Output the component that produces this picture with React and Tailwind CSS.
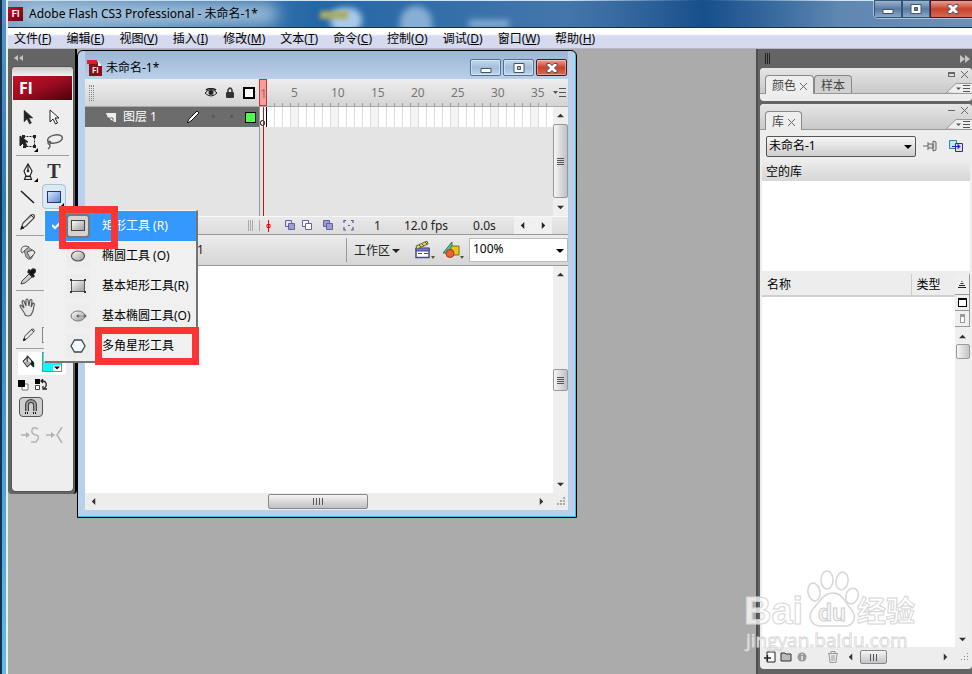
import React from 'react';

const MENUS = [
  ['文件', 'F'], ['编辑', 'E'], ['视图', 'V'], ['插入', 'I'], ['修改', 'M'], ['文本', 'T'],
  ['命令', 'C'], ['控制', 'O'], ['调试', 'D'], ['窗口', 'W'], ['帮助', 'H'],
];

const FRAMES = Array.from({ length: 37 }, (_, i) => i + 1);

// Small triangle used by scroll bars and drop-downs
function Arrow({ dir = 'down', className = 'w-[7px] h-[7px]' }) {
  const paths = {
    up: 'M0 6 4 2l4 4z',
    down: 'M0 2h8L4 6z',
    left: 'M6 0v8L2 4z',
    right: 'M2 0v8l4-4z',
  };
  return (
    <svg viewBox="0 0 8 8" className={className} fill="currentColor" aria-hidden="true">
      <path d={paths[dir]} />
    </svg>
  );
}

function Icon({ children, className = 'w-5 h-5' }) {
  return (
    <svg viewBox="0 0 20 20" className={className} fill="none" stroke="#222" strokeWidth="1" aria-hidden="true">
      {children}
    </svg>
  );
}

const Corner = () => <path d="M20 16v4h-4z" fill="#000" stroke="none" />;

const toolIcons = {
  select: <path d="M6 3v12l3-3 2.500 5 2-1-2.500-5h4z" fill="#222" stroke="#444" strokeWidth=".5" />,
  subselect: <path d="M6 3v12l3-3 2.500 5 2-1-2.500-5h4z" fill="#fff" />,
  transform: (
    <>
      <rect x="5.500" y="4.500" width="11" height="10" strokeDasharray="2 1" />
      <path d="M2 4v10l3-3 2 4 2-1-2-4h3z" fill="#222" />
      <path d="M4 3h3v3H4zM15 3h3v3h-3zM15 13h3v3h-3zM5 14h3v2H5z" fill="#222" stroke="none" />
      <Corner />
    </>
  ),
  lasso: (
    <>
      <ellipse cx="11" cy="7" rx="7.500" ry="4" transform="rotate(-12 11 7)" strokeWidth="1.400" stroke="#555" />
      <path d="M5 9c-2 1-1 4 1 3s0-3-1-3M5 12c2 2 1 3-1 5" strokeWidth="1.200" stroke="#555" />
    </>
  ),
  pen: (
    <>
      <path d="M10 2 6 9l2 5h4l2-5z" fill="#fff" strokeWidth="1.200" />
      <path d="M10 2v7M7.500 14.500h5l1 3h-7z" fill="#ddd" strokeWidth="1.200" />
      <circle cx="10" cy="9" r="1" fill="#222" />
      <Corner />
    </>
  ),
  line: <path d="M3 4l13 12" strokeWidth="1.600" />,
  pencil: (
    <>
      <path d="M3 17l2-6L13 3q2-1 3 0t0 3L8 14z" fill="#eee" stroke="#444" strokeWidth="1.200" />
      <path d="M6 11l8-7" stroke="#aaa" />
      <path d="M3 17l1-3 2 2zM13 3l3 3" fill="#111" />
    </>
  ),
  ink: (
    <>
      <path d="M6 8 10 5l7 5-4 7q-3 1-5-2z" fill="#aaa" stroke="#666" />
      <path d="M9 10l6-2 2 3-5 5zM3 9q0-5 5-5l3 1-5 4q-2 4-3 0z" fill="#e8e8e8" stroke="#555" />
    </>
  ),
  dropper: (
    <>
      <path d="M3 17l1-3 7-7 3 3-7 6z" fill="#ccc" stroke="#444" />
      <path d="M10 5l5 5 1-1-1-2 2-2q1-3-2-3l-3 2-1-1z" fill="#111" strokeWidth="1.500" />
    </>
  ),
  hand: (
    <path
      d="M7 17 3 11Q1 8 3 8l3 3-2-6q0-2 2-1l2 5V3q1-2 2 0l1 6 1-6q2-1 2 1l-1 6 2-4q2 0 1 3l-1 5-2 4q-3 2-6 0z"
      fill="#e6e6e6"
      stroke="#555"
      strokeWidth="1.100"
    />
  ),
  bucket: (
    <>
      <path d="M4 9l6-6 6 7-7 6z" fill="#ddd" strokeWidth="1.300" />
      <path d="M9 2v8M15 9q3 1 2 7-3-1-3-5z" fill="#111" strokeWidth="1.300" />
      <path d="M5 10h9l-5 5z" fill="#aaa" stroke="none" />
    </>
  ),
};

function Tool({ name, label, size = 'h-[25px]' }) {
  return (
    <button aria-label={label} className={`flex w-6 ${size} items-center justify-center`}>
      <Icon>{toolIcons[name]}</Icon>
    </button>
  );
}

const Rule = () => <div className="ml-[3px] mr-[3px] h-px bg-[#9c9c9c] mb-[3px] mt-px" />;

function ShapeMenu() {
  const items = [
    ['矩形工具 (R)', <rect x="3.500" y="4.500" width="13" height="10" fill="url(#steel)" stroke="#444" />],
    ['椭圆工具 (O)', <ellipse cx="10" cy="10" rx="6.500" ry="5" fill="url(#steel)" stroke="#555" strokeWidth="1.200" />],
    ['基本矩形工具(R)', (
      <>
        <rect x="3.500" y="4.500" width="13" height="11" fill="url(#steel)" stroke="#555" />
        <path d="M2 3h2v2H2zM16 3h2v2h-2zM2 15h2v2H2zM16 15h2v2h-2z" fill="#333" stroke="none" />
      </>
    )],
    ['基本椭圆工具(O)', (
      <>
        <ellipse cx="10" cy="10" rx="7" ry="5" fill="url(#steel)" stroke="#777" />
        <path d="M10 10h7M16 9h2v2h-2zM9 9h2v2H9z" fill="#555" stroke="#777" strokeWidth=".6" />
      </>
    )],
    ['多角星形工具', <path d="M6.500 4h7l3.500 6-3.500 6h-7L3 10z" fill="#f4f9fb" stroke="#3d4a53" strokeWidth="1.300" />],
  ];

  return (
    <div className="absolute left-[2px] top-full z-20 mt-px w-[154px] border border-r-2 border-b-2 border-[#f4f4f4] border-r-[#747474] border-b-[#747474] bg-[#f0f0f0]">
      {items.map(([text, art], i) => (
        <button
          key={text}
          className={`flex h-[30px] w-full items-center whitespace-nowrap text-left text-[12px] ${i === 0 ? 'bg-[#3399ff] text-white' : 'text-black'}`}
        >
          <span className="flex w-[21px] justify-center">
            {i === 0 && (
              <svg viewBox="0 0 8 8" className="w-2 h-2" fill="none" stroke="#fff" strokeWidth="2"><path d="M0 3l3 3 5-5" /></svg>
            )}
          </span>
          <span className={`mr-3 flex h-6 w-6 shrink-0 items-center justify-center ${i === 0 ? 'rounded border-2 border-[#777] bg-[#d3d3d3]' : 'bg-[#ededed]'}`}>
            <Icon className="h-5 w-5 shrink-0">{art}</Icon>
          </span>
          {text}
        </button>
      ))}
      {/* Highlight boxes */}
      <div className="pointer-events-none absolute -top-[5px] left-[14px] h-[43px] w-[59px] border-[7px] border-[#fd3434]" />
      <div className="pointer-events-none absolute -bottom-[4px] left-[50px] h-[38px] w-[104px] border-[7px] border-[#fd3434]" />
    </div>
  );
}

function ToolsPanel() {
  return (
    <aside className="flex w-[69px] shrink-0 flex-col rounded-b border-r-2 border-r-black bg-[#646464] pb-[3px] pl-1 pr-[2px]">
      <div className="flex h-[18px] items-center pl-[2px] text-[#c4c4c4]">
        <svg viewBox="0 0 10 6" className="h-[6px] w-[10px]" fill="currentColor"><path d="M4 0v6L0 3zM9 0v6L5 3z" /></svg>
      </div>
      <div className="rounded bg-[#eee] pb-[46px] shadow-[0_0_0_1px_#555]">
        <div className="h-[9px] rounded-t bg-linear-to-b from-[#c9c9c9] to-[#f3f3f3]" />
        <div className="mx-px flex h-[24px] items-center bg-linear-to-br from-[#c8102a] via-[#9b0c20] to-[#4d0209] pl-[6px] font-['Open_Sans',sans-serif] text-[16px] font-bold text-white">
          Fl
        </div>
        <div className="mt-[4px] flex flex-col px-px">
          <div className="flex gap-[2px] pl-[3px]"><Tool name="select" label="选择" /><Tool name="subselect" label="部分选取" /></div>
          <div className="flex gap-[2px] pl-[3px]"><Tool name="transform" label="任意变形" /><Tool name="lasso" label="套索" /></div>
          <Rule />
          <div className="flex gap-[2px] pl-[3px]">
            <Tool name="pen" label="钢笔" />
            <button aria-label="文本" className="h-[25px] w-6 font-['Liberation_Serif',serif] text-[20px] font-bold leading-[25px] text-[#333]">T</button>
          </div>
          <div className="flex gap-[2px] pl-[3px]">
            <Tool name="line" label="线条" />
            <div className="relative">
              <button aria-label="矩形" className="flex h-[25px] w-6 items-center justify-center rounded border border-[#a9c3d6] bg-[#dbe9f3]">
                <Icon className="h-5 w-5 shrink-0">
                  <rect x="3.500" y="4.500" width="13" height="11" fill="url(#bluefill)" stroke="#223a66" />
                  <Corner />
                </Icon>
              </button>
              <ShapeMenu />
            </div>
          </div>
          <div className="pl-[3px]"><Tool name="pencil" label="铅笔" /></div>
          <Rule />
          <div className="pl-[3px]"><Tool name="ink" label="墨水瓶" /></div>
          <div className="pl-[3px]"><Tool name="dropper" label="滴管" /></div>
          <Rule />
          <div className="pl-[3px]"><Tool name="hand" label="手形" size="h-[25px]" /></div>
          <div className="mt-[4px] flex items-center gap-[3px] pl-[8px]">
            <button aria-label="笔触颜色" className="flex h-[24px] w-[18px] items-center"><Icon className="h-4 w-4">{toolIcons.pencil}</Icon></button>
            <span className="h-4 w-4 border border-[#888]" />
          </div>
          <Rule />
          <div className="ml-[5px] mr-[6px] flex h-[23px] items-start justify-between rounded-br bg-white pr-[4px]">
            <button aria-label="填充颜色"><Icon className="ml-[2px] mt-[2px] h-4 w-4">{toolIcons.bucket}</Icon></button>
            <span className="flex h-[20px] w-5 items-end justify-end border border-[#888] bg-[#00ffff]">
              <span className="bg-white px-px"><Arrow className="h-[6px] w-[6px]" /></span>
            </span>
          </div>
          <div className="flex h-[20px] items-center gap-[6px] pl-[5px]">
            <svg viewBox="0 0 11 11" className="h-[11px] w-[11px]"><path d="M4 4h6v6H4z" fill="#fff" stroke="#777" /><path d="M0 0h7v7H0z" fill="#000" /></svg>
            <svg viewBox="0 0 14 12" className="h-3 w-[14px]" fill="none"><path d="M0 0h5v5H0z" fill="#000" /><path d="M.5 6.500h4v4h-4z" fill="#fff" stroke="#444" /><path d="M6 2h2q4 1 3 5L9 10M8 0 6 2l2 2M8 7v3h4" stroke="#222" strokeWidth="1.300" /></svg>
          </div>
          <button aria-label="贴紧至对象" className="ml-[6px] mt-[2px] flex h-[20px] w-6 items-center justify-center rounded border border-[#555] bg-[#cfcfcf]">
            <svg viewBox="0 0 16 16" className="h-4 w-4" fill="none"><path d="M4 12V6a4 4 0 0 1 8 0v6" stroke="#444" strokeWidth="4" /><path d="M4 12V6a4 4 0 0 1 8 0v6" stroke="#aaa" strokeWidth="1.600" /><path d="M2 14h4M10 14h4" stroke="#111" strokeDasharray="1 1" strokeWidth="2" /></svg>
          </button>
          <div className="mt-[8px] flex h-[20px] items-center gap-[7px] pl-[8px]">
            <svg viewBox="0 0 18 16" className="h-4 w-[18px]" fill="none" stroke="#b2b2b2" strokeWidth="1.500"><path d="M0 8h6M17 2q-5-3-6 1t4 5 0 7l-5 0" /><path d="M5 5v6l4-3z" fill="#b2b2b2" stroke="none" /></svg>
            <svg viewBox="0 0 18 16" className="h-4 w-[18px]" fill="none" stroke="#b2b2b2" strokeWidth="1.500"><path d="M0 8h6M16 0l-5 8 5 8" /><path d="M5 5v6l4-3z" fill="#b2b2b2" stroke="none" /></svg>
          </div>
        </div>
      </div>
    </aside>
  );
}

function WindowButton({ kind, big }) {
  const label = { min: '最小化', max: '最大化', close: '关闭' }[kind];
  const tone = kind === 'close'
    ? 'border-[#4c1522] bg-linear-to-b from-[#e8a090] via-[#c8412c] to-[#d46a50]'
    : big
      ? 'border-[#33557c] bg-linear-to-b from-[#9db5ce] via-[#587ba2] to-[#8ba9c8]'
      : 'border-[#52708f] bg-linear-to-b from-[#c3d8ee] via-[#a3bedb] to-[#bcd5ee]';
  return (
    <button aria-label={label} className={`flex items-center justify-center border ${tone} ${big ? `h-[18px] ${kind === 'close' ? 'w-[46px]' : 'w-7'}` : 'h-[17px] w-[31px] rounded-xs shadow-[inset_0_0_0_1px_#ffffff66]'}`}>
      <svg viewBox="0 0 12 10" className="h-[10px] w-3" fill="#fff" stroke="#465566" strokeWidth="1">
        {kind === 'min' && <path d="M1 5.500h10v4H1z" />}
        {kind === 'max' && <path d="M1 .5h10v9H1zM4.500 3.500v3h3v-3z" fillRule="evenodd" />}
        {kind === 'close' && <path d="M1 .5h3l2 2 2-2h3v2L8.500 5 11 7.500v2H8l-2-2-2 2H1v-2L3.500 5 1 2.500z" />}
      </svg>
    </button>
  );
}

function VScroll({ thumb, spacer }) {
  return (
    <div className="flex w-[15px] shrink-0 flex-col items-center bg-[#efefef] py-[5px] text-[#333]">
      <Arrow dir="up" />
      <div className={spacer} />
      <div className={`flex w-[15px] shrink-0 flex-col items-center justify-center gap-px rounded-xs border border-[#999] bg-linear-to-r from-[#f6f6f6] to-[#bfc0c4] ${thumb}`}>
        {[0, 1, 2, 3].map((n) => <span key={n} className="h-px w-[7px] bg-[#555]" />)}
      </div>
      <div className="flex-1" />
      <Arrow />
    </div>
  );
}

const MenuGlyph = () => (
  <svg viewBox="0 0 13 9" className="h-[9px] w-[13px]" fill="none" stroke="#555"><path d="M0 3h5L2.500 6z" fill="#555" stroke="none" /><path d="M6 .5h7M6 4.500h7M6 8.500h7" /></svg>
);

function Timeline() {
  return (
    <section>
      <div className="flex h-[28px] border-b border-[#aaa] bg-linear-to-b from-[#eee] to-[#d4d4d4]">
        <div className="flex w-[174px] shrink-0 items-center pl-[4px]">
          <div className="flex h-[16px] gap-px">
            {[0, 1, 2].map((n) => <span key={n} className="border-l border-dotted border-[#888]" />)}
          </div>
          <div className="ml-auto flex items-center gap-[8px] pr-[4px]">
            <svg viewBox="0 0 12 9" className="h-[9px] w-3"><path d="M0 5q6-7 12 0-6 6-12 0z" fill="#ddd" stroke="#222" /><circle cx="6" cy="4.500" r="2.500" fill="#222" /><path d="M1 2q5-3 10 0" stroke="#222" strokeWidth="1.500" fill="none" /></svg>
            <svg viewBox="0 0 10 11" className="h-[11px] w-[10px]"><path d="M3 5V3q2-4 4 0v2" fill="none" stroke="#333" strokeWidth="1.500" /><rect x="1" y="5" width="8" height="6" rx="1" fill="#333" /></svg>
            <span className="h-3 w-3 border-2 border-black bg-white" />
          </div>
        </div>
        <div className="flex min-w-0 flex-1 overflow-hidden text-[12px] text-[#777]">
          {FRAMES.map((n) => (
            <div key={n} className={`relative flex h-[27px] w-2 shrink-0 flex-col justify-between ${n === 1 ? 'border border-[#c33] bg-[#ff9a9a]' : ''}`}>
              <span className={`w-0 leading-[28px] ${n === 1 ? 'h-[24px]' : 'h-[23px]'}`}>{n === 1 || n % 5 === 0 ? n : ''}</span>
              {n > 1 && <span className="h-[3px] border-r border-[#999]" />}
            </div>
          ))}
        </div>
        <button aria-label="帧视图" className="flex w-[15px] items-center"><MenuGlyph /></button>
      </div>
      <div className="flex h-[109px] bg-[#e4e4e4]">
        <div className="w-[174px] shrink-0">
          <div className="flex h-[20px] items-center bg-[#6c6c6c] pl-[21px] pr-[3px] text-[12px] text-white">
            <svg viewBox="0 0 10 9" className="h-[9px] w-[10px]"><path d="M0 0h10v9H7V5H2z" fill="#eee" /><path d="M2 5h5v4z" fill="#fff" stroke="#333" strokeWidth=".7" /></svg>
            <span className="ml-[7px]">图层 1</span>
            <svg viewBox="0 0 12 12" className="ml-auto h-3 w-3"><path d="M0 12l2-4 8-8 2 2-8 8z" fill="#fff" stroke="#111" /></svg>
            <span className="ml-[12px] text-[#555]">•</span>
            <span className="ml-[14px] text-[#555]">•</span>
            <span className="ml-[11px] h-[11px] w-[11px] border border-black bg-[#4dff4d]" />
          </div>
        </div>
        <div className="relative min-w-0 flex-1 overflow-hidden">
          <div className="flex h-[20px] bg-white">
            {FRAMES.map((n) => (
              <div key={n} className={`flex w-2 shrink-0 items-end justify-center border-r ${n === 1 ? 'border-black' : 'border-[#ddd]'} ${n % 5 === 0 ? 'bg-[#f4f4f4]' : ''}`}>
                {n === 1 && <span className="mb-px h-[6px] w-[5px] rounded-full border border-black" />}
              </div>
            ))}
          </div>
          {/* Playhead */}
          <div className="absolute inset-y-0 left-[4px] w-px bg-[#cc1111]" />
          <div className="absolute inset-y-0 left-0 w-px bg-[#999]" />
        </div>
        <VScroll spacer="h-[5px] shrink-0" thumb="h-[74px]" />
      </div>
      <div className="flex h-[19px] items-center border-y border-t-[#f8f8f8] border-b-[#999] bg-linear-to-b from-[#e9e9e9] to-[#dcdcdc] text-[12px] text-[#222]">
        <div className="flex w-[175px] shrink-0 justify-end border-r border-[#aaa] pr-[6px]">
          <span className="h-[11px] w-[5px] border-x border-[#aaa] bg-[linear-gradient(90deg,transparent_1px,#aaa_1px,#aaa_2px,transparent_2px)]" />
        </div>
        <svg viewBox="0 0 5 12" className="ml-[6px] h-3 w-[5px]" fill="none" stroke="#f00"><path d="M2.500 0v12M1 4.500h3v3H1z" /></svg>
        <div className="ml-[14px] flex gap-[6px]">
          {['#dfe4f6', '#ffffff', '#9c9cd0'].map((c, i) => (
            <svg key={c} viewBox="0 0 11 11" className={`h-[11px] w-[11px] ${i === 2 ? 'ml-[4px]' : ''}`} stroke="#6262a0"><path d="M.5.5h6v6h-6z" fill={i === 1 ? '#fff' : c} /><path d="M3.500 3.500h6v6h-6z" fill={i === 1 ? '#fff' : '#9c9cd0'} /></svg>
          ))}
          <svg viewBox="0 0 11 11" className="ml-[3px] h-[11px] w-[11px]" fill="none" stroke="#55558a"><path d="M3 .5H1V3M1 7v3h2M8 .5h2V3M10 7v3H8M5 5.500h2" strokeWidth="1.200" /></svg>
        </div>
        <span className="ml-[20px]">1</span>
        <span className="ml-[23px] whitespace-nowrap">12.0 fps</span>
        <span className="ml-[25px]">0.0s</span>
        <div className="ml-auto mr-[16px] flex h-full w-[38px] items-center justify-between bg-[#f0f0f0] px-[5px]">
          <Arrow dir="left" /><Arrow dir="right" />
        </div>
      </div>
    </section>
  );
}

function DocumentWindow() {
  return (
    <section className="mt-px flex w-full max-w-[500px] flex-col rounded-t-md border border-black bg-[#bad0ea] shadow-[inset_-1px_-1px_0_#31c5df] pb-[7px] pl-[7px] pr-[8px]">
      <header className="flex h-[28px] items-center gap-[3px] bg-linear-to-b from-[#9bb5d3] to-[#bad0ea] pl-[2px] pr-px pt-[5px] text-[12px] text-black">
        <svg viewBox="0 0 16 16" className="h-4 w-4"><path d="M2 2h9l4 4v10H2z" fill="#8e0d1b" /><path d="M0 0h10v4H0z" fill="#d42230" /><path d="M11 1l4 5h-4z" fill="#fff" /><text x="5" y="13" fill="#fff" fontSize="8" fontWeight="700" fontFamily="Lato, sans-serif">Fl</text></svg>
        <span>未命名-1*</span>
        <div className="ml-auto flex gap-[2px]">
          <WindowButton kind="min" /><WindowButton kind="max" /><WindowButton kind="close" />
        </div>
      </header>
      <Timeline />
      {/* Edit bar */}
      <div className="flex h-[31px] items-center border-b border-[#999] bg-linear-to-b from-[#ececec] to-[#d6d6d6] text-[12px] text-black">
        <span className="ml-[112px] text-[#313]">1</span>
        <div className="ml-auto flex h-full items-center">
          <span className="mr-[7px] h-6 border-l border-[#999]" />
          <button className="flex items-center gap-[2px] pt-[2px] text-[#222]">工作区<Arrow className="h-2 w-2" /></button>
          <button aria-label="编辑场景" className="ml-[15px]">
            <svg viewBox="0 0 20 18" className="h-[18px] w-5"><path d="M1 7.500h13v9H1z" fill="#fff" stroke="#4a4a90" strokeWidth="1.500" /><path d="M1 7h13v3H1zM3 12.500h4M9 12.500h4" fill="#7777bb" stroke="#4a4a90" /><path d="M1 5l11-5 1 3L2 8z" fill="#e4dc28" stroke="#666" /><path d="M4 4l2 2M7 3l2 2M10 1l2 2" stroke="#553" /><path d="M16 15h4l-2 3z" fill="#553" /></svg>
          </button>
          <button aria-label="编辑元件" className="ml-[7px]">
            <svg viewBox="0 0 22 18" className="h-[18px] w-[22px]"><path d="M10 1v11H1z" fill="#3cc9a5" stroke="#267a60" /><path d="M9 5h8v9H9z" fill="#e5c51e" stroke="#806c12" /><circle cx="8" cy="12.500" r="4" fill="#f06236" stroke="#a53518" /><path d="M18 15h4l-2 3z" fill="#553" /></svg>
          </button>
          <div className="relative ml-[5px]">
            <select aria-label="缩放" className="block h-[24px] w-[99px] appearance-none border border-[#bbb] bg-white pb-[2px] pl-[3px] text-[12px]"><option>100%</option></select>
            <span className="pointer-events-none absolute right-[4px] top-[9px]"><Arrow className="h-2 w-2" /></span>
          </div>
        </div>
      </div>
      {/* Stage */}
      <div className="flex h-[227px] bg-white">
        <div className="flex-1" />
        <VScroll spacer="h-[91px]" thumb="h-[22px]" />
      </div>
      <div className="flex h-[17px] items-center bg-[#ededed] pb-px pl-[5px] text-[#333]">
        <Arrow dir="left" />
        <div className="flex flex-1 justify-center">
          <div className="flex h-[15px] w-[100px] items-center justify-center gap-[2px] rounded-xs border border-[#888] bg-linear-to-b from-[#f5f5f5] to-[#bfc0c4]">
            {[0, 1, 2, 3].map((n) => <span key={n} className="h-[7px] w-px bg-[#555]" />)}
          </div>
        </div>
        <Arrow dir="right" />
        <svg viewBox="0 0 9 9" className="ml-[12px] mr-[2px] h-[9px] w-[9px]" fill="#aaa"><path d="M6 0h2v2H6zM3 3h2v2H3zM6 3h2v2H6zM0 6h2v2H0zM3 6h2v2H3zM6 6h2v2H6z" /></svg>
      </div>
    </section>
  );
}

function PanelTabs({ tabs, minimized }) {
  return (
    <div className="flex h-[26px] items-end rounded-t border-b border-[#999] bg-linear-to-b from-[#e6e6e6] to-[#c9c9c9] pl-[5px] text-[12px] text-[#444]">
      {tabs.map((tab, i) => (
        <button key={tab} className={`flex items-center gap-[4px] rounded-t border border-b-0 border-[#888] px-[6px] pt-[2px] ${i === 0 ? '-mb-px h-[19px] bg-[#eee]' : 'h-[18px] bg-[#d0d0d0]'}`}>
          {tab}
          {i === 0 && <svg viewBox="0 0 7 7" className="h-[7px] w-[7px]" stroke="#666"><path d="M0 0l7 7M7 0 0 7" /></svg>}
        </button>
      ))}
      <div className="ml-auto flex h-full flex-col items-end justify-between pr-[2px] pt-[3px]">
        <div className="flex items-center gap-[6px] pr-[2px]">
          <span className={`w-[7px] border-[#666] ${minimized ? 'h-[5px] border border-t-2' : 'border-t'}`} />
          <svg viewBox="0 0 7 7" className="h-[7px] w-[7px]" stroke="#666"><path d="M0 0l7 7M7 0 0 7" /></svg>
        </div>
        <svg viewBox="0 0 26 10" className="-mr-[2px] h-[10px] w-[26px]"><path d="M0 10 10 .5h17V11z" fill="#eee" stroke="#999" /><path d="M10 4.500h5L12.500 7z" fill="#555" /><path d="M17 2.500h7M17 5.500h7M17 8.500h7" stroke="#555" /></svg>
      </div>
    </div>
  );
}

function Watermark() {
  return (
    <svg viewBox="0 0 180 86" className="pointer-events-none absolute bottom-[20px] right-[49px] h-[86px] w-[180px]" stroke="#d6d6d6" fill="#ffffff" fillOpacity=".75" strokeWidth="1">
      <text x="1" y="56" fontSize="38" fontWeight="700" fontFamily="Liberation Sans, sans-serif">Bai</text>
      <g strokeWidth="1.500">
        <ellipse cx="71" cy="24" rx="6" ry="9" transform="rotate(-12 71 24)" />
        <ellipse cx="84" cy="12" rx="6" ry="9" />
        <ellipse cx="99" cy="13" rx="6" ry="9" transform="rotate(10 99 13)" />
        <ellipse cx="109" cy="28" rx="6" ry="8" transform="rotate(20 109 28)" />
        <path d="M90 25c10 0 12 10 18 16 8 10 0 18-8 17H78c-10 0-14-9-8-17 6-6 10-16 20-16z" />
      </g>
      <text x="75" y="53" fontSize="23" fontWeight="700" fontFamily="Liberation Sans, sans-serif" fill="#f4f4f4" stroke="#cdcdcd">du</text>
      <text x="114" y="54" fontSize="29" fontWeight="700" fontFamily="Noto Sans CJK SC, sans-serif">经验</text>
      <text x="3" y="79" fontSize="19" fontFamily="Open Sans, sans-serif" strokeWidth=".8">jingyan.baidu.com</text>
    </svg>
  );
}

function RightDock() {
  return (
    <aside className="relative flex w-[216px] shrink-0 flex-col border-l-2 border-[#4f4f4f] bg-[#646464] pb-[5px] pl-[2px]">
      <div className="flex h-[19px] items-center justify-between pl-[5px] pr-[2px] text-[#c4c4c4]">
        <span className="h-[11px] w-[5px] border-x border-[#222] bg-[linear-gradient(90deg,transparent_1px,#222_1px,#222_2px,transparent_2px)]" />
        <svg viewBox="0 0 10 8" className="h-2 w-[10px]" fill="currentColor"><path d="M0 0v8l5-4zM5 0v8l5-4z" /></svg>
      </div>
      <section className="mb-[3px] h-[33px] rounded bg-[#ededed]">
        <PanelTabs tabs={['颜色', '样本']} minimized />
      </section>
      <section className="flex min-h-0 flex-1 flex-col rounded bg-[#ededed] pl-[2px] pr-[2px] text-[12px] text-black">
        <div className="-mx-[2px]"><PanelTabs tabs={['库']} /></div>
        <div className="flex h-[32px] items-center pl-[4px]">
          <div className="relative">
            <select aria-label="库文档" className="block h-[21px] w-[150px] appearance-none rounded-xs border border-[#555] bg-linear-to-b from-[#f6f6f6] to-[#cdcdcd] pl-[2px]"><option>未命名-1</option></select>
            <span className="pointer-events-none absolute right-[4px] top-[7px]"><Arrow className="h-2 w-2" /></span>
          </div>
          <svg viewBox="0 0 14 12" className="ml-[7px] h-3 w-[14px]"><path d="M0 6h5M5 2v8M5 4h5v4H5M10 1l3 1v8l-3 1z" fill="#ddd" stroke="#666" /></svg>
          <svg viewBox="0 0 14 12" className="ml-[12px] h-3 w-[14px]"><path d="M.5.5h7v8h-7z" fill="#bde8f2" stroke="#388" /><path d="M6.500 3.500h7v8h-7z" fill="#dde" stroke="#336" /><path d="M3 6.500h6M9 4.500l2 2-2 2z" fill="#22d" stroke="#22d" /></svg>
        </div>
        <div className="flex h-[19px] items-center bg-linear-to-b from-[#ebebeb] to-[#d6d6d6] pl-[4px]">空的库</div>
        <div className="h-[90px] bg-white" />
        <div className="mt-[3px] flex min-h-0 flex-1">
          <div className="flex-1 bg-white">
            <table className="w-full border-collapse text-left">
              <thead>
                <tr className="h-[22px] border-b-2 border-[#d0d0d0] bg-[#ededed]">
                  <th className="p-0 pl-[5px] font-normal">名称</th>
                  <th className="w-[44px] border-l border-[#ccc] p-0 pl-[5px] font-normal">类型</th>
                </tr>
              </thead>
            </table>
          </div>
          <div className="flex w-[15px] flex-col items-center bg-[#efefef] pb-[4px] text-[#333]">
            <button aria-label="排序" className="flex h-[21px] w-full items-center justify-center border-b border-r border-[#999]">
              <svg viewBox="0 0 8 7" className="h-[7px] w-2" stroke="#222"><path d="M3.500.5h1M2.500 2.500h3M1 4.500h6M0 6.500h8" /></svg>
            </button>
            <button aria-label="宽库视图" className="flex h-4 w-full items-center justify-center border-b border-r border-[#999]"><span className="h-[9px] w-[9px] border border-t-2 border-black bg-white" /></button>
            <button aria-label="窄库视图" className="flex h-4 w-full items-center justify-center border-b border-r border-[#999]"><span className="h-[9px] w-[5px] border border-t-[3px] border-[#999] bg-white" /></button>
            <Arrow dir="up" className="mt-[6px] h-[7px] w-[7px]" />
            <div className="mt-[4px] h-[15px] w-[14px] rounded-xs border border-[#999] bg-linear-to-r from-[#f6f6f6] to-[#c4c4c8]" />
            <div className="flex-1" />
            <Arrow />
          </div>
        </div>
        <div className="flex h-[22px] items-center pb-[2px] text-[#333]">
          <svg viewBox="0 0 12 12" className="ml-[2px] h-3 w-3"><path d="M3 1h8v10H3z" fill="#fff" stroke="#222" /><path d="M0 7h7M3.500 4v6" stroke="#222" strokeWidth="1.300" /></svg>
          <svg viewBox="0 0 12 10" className="ml-[4px] h-[10px] w-3"><path d="M1 1h4l1 1h5v7H1z" fill="#bbb" stroke="#333" /></svg>
          <svg viewBox="0 0 10 10" className="ml-[5px] h-[10px] w-[10px]"><circle cx="5" cy="5" r="4.500" fill="#999" /><path d="M5 4v4M5 2v1" stroke="#eee" strokeWidth="1.500" /></svg>
          <svg viewBox="0 0 10 12" className="ml-[21px] h-3 w-[10px]" fill="none" stroke="#999"><path d="M0 2.500h10M3 2V.5h4V2M1 3l1 8.500h6L9 3M4 4v6M6 4v6" /></svg>
          <Arrow dir="left" className="ml-[9px] h-2 w-[7px]" />
          <div className="ml-[6px] flex h-[14px] w-[27px] items-center justify-center gap-[2px] rounded-xs border border-[#888] bg-linear-to-b from-[#f5f5f5] to-[#c4c4c8]">
            {[0, 1, 2].map((n) => <span key={n} className="h-[7px] w-px bg-[#555]" />)}
          </div>
          <Arrow dir="right" className="ml-auto h-2 w-[7px]" />
          <svg viewBox="0 0 9 9" className="ml-[12px] h-[9px] w-[9px]" fill="#888"><path d="M6 0h1v1H6zM3 3h1v1H3zM6 3h1v1H6zM0 6h1v1H0zM3 6h1v1H3zM6 6h1v1H6z" /></svg>
        </div>
      </section>
      <Watermark />
    </aside>
  );
}

export default function App() {
  return (
    <div className="flex h-screen min-h-[600px] overflow-hidden bg-[#ababab] font-['Noto_Sans','Noto_Sans_CJK_SC',sans-serif]">
      <svg className="absolute h-0 w-0" aria-hidden="true">
        <defs>
          <linearGradient id="steel" x1="0" y1="0" x2="1" y2="1"><stop stopColor="#fff" /><stop offset="1" stopColor="#999" /></linearGradient>
          <linearGradient id="bluefill" x1="0" y1="0" x2="1" y2="1"><stop stopColor="#dce9ff" /><stop offset="1" stopColor="#5c86cf" /></linearGradient>
        </defs>
      </svg>
      {/* Window frame */}
      <div className="w-2 shrink-0 border-l-2 border-r-2 border-l-[#12304f] border-r-[#e5f0f8] bg-linear-to-b from-[#5b93c5] from-0% via-[#2c7fb6] via-30% to-[#63bbe6]" />
      <div className="flex min-w-0 flex-1 flex-col">
        <header className="relative flex h-[28px] shrink-0 items-start overflow-hidden border-b border-[#12304f] bg-linear-to-r from-[#7ca6cc] from-0% via-[#2467a5] via-32% to-[#6c8fb5] text-[12px] text-black shadow-[inset_0_1px_0_#cfe4f5]">
          <div className="absolute left-[10px] top-[4px] h-5 w-[260px] rounded-full bg-[#bcd2e4]/80 blur-sm" />
          <div className="absolute left-[322px] top-[8px] h-6 w-8 rounded-full bg-[#a9cbea] blur-[3px]" />
          <div className="absolute left-[312px] top-[11px] h-2 w-[28px] bg-[#a9ac65] blur-[2px]" />
          <div className="absolute left-[392px] top-[6px] h-7 w-8 rounded-t-full bg-[#87aed4] blur-[3px]" />
          <div className="absolute left-[461px] top-[20px] h-2 w-10 bg-[#88aed3] blur-[3px]" />
          <div className="absolute left-[560px] top-0 h-full w-[270px] bg-linear-to-r from-transparent via-[#174f8b] to-transparent" />
          <div className="relative flex h-full items-center gap-[6px]">
            <span className="flex h-[14px] w-[15px] items-center justify-center bg-linear-to-br from-[#c8102a] to-[#6a0511] font-['Lato',sans-serif] text-[10px] font-bold text-white">Fl</span>
            <h1>Adobe Flash CS3 Professional - 未命名-1*</h1>
          </div>
          <div className="relative ml-auto -mr-[4px] flex overflow-hidden rounded-bl shadow-[0_0_0_1px_#ffffff77]">
            <WindowButton kind="min" big /><WindowButton kind="max" big /><WindowButton kind="close" big />
          </div>
        </header>
        <nav className="flex h-[21px] shrink-0 items-center gap-[15px] border-b border-[#b5b9c8] bg-linear-to-b from-white from-30% to-[#d5daee] to-40% pl-[6px] pt-[2px] text-[12px] text-black">
          {MENUS.map(([name, key]) => (
            <button key={key} className="whitespace-nowrap">{name}(<u>{key}</u>)</button>
          ))}
        </nav>
        <main className="flex min-h-0 flex-1 items-start">
          <ToolsPanel />
          <div className="min-w-0 flex-1"><DocumentWindow /></div>
          <div className="flex self-stretch"><RightDock /></div>
        </main>
      </div>
    </div>
  );
}
